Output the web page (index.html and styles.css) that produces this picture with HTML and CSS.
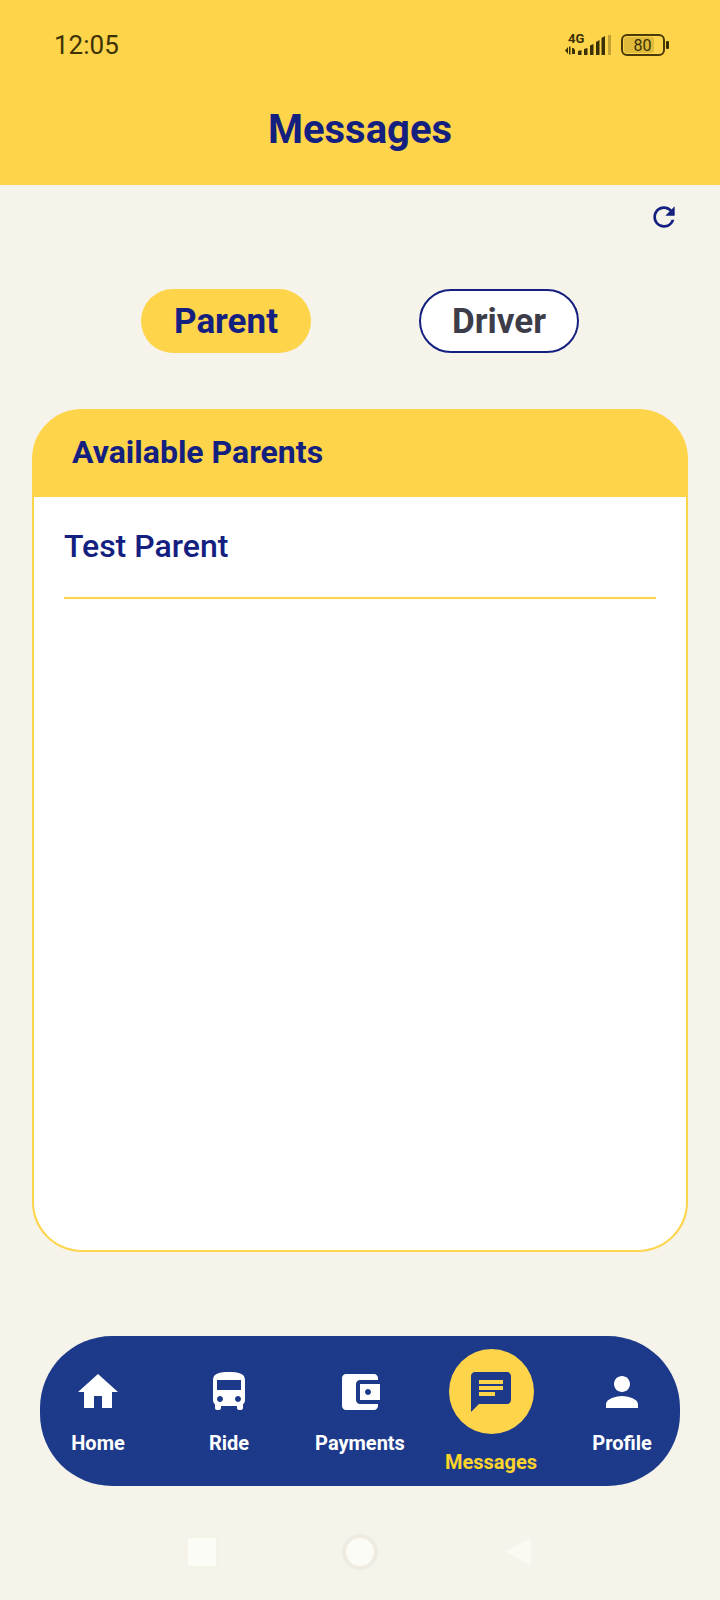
FILE: index.html
```html
<!DOCTYPE html>
<html lang="en">
<head>
<meta charset="utf-8">
<title>Messages</title>
<link rel="stylesheet" href="styles.css">
</head>
<body>
<div class="app">
  <header class="header">
    <div class="status">
      <span class="time">12:05</span>
      <svg class="status-icons" width="110" height="30" viewBox="-6 0 110 30" aria-hidden="true">
        <text x="-2" y="13" class="net">4G</text>
        <path d="M-5 20.500l3-3.500v7zM-1 16.500h1.500v8H-1zM2 18h1.500l1.500 2v4H2zM8 21l3.500-1v5H8zM14 19l3.500-1v7H14zM20 15.500l3.500-1.500v11H20zM26 12l3.500-2v15H26zM31.500 8l3.500-2v19h-3.500z" fill="#3a3005"/>
        <path d="M38 5h3v20h-3z" fill="#3a3005" opacity=".3"/>
        <rect x="52" y="5" width="42" height="20" rx="5" fill="none" stroke="#4a3a08" stroke-width="2"/>
        <rect x="54" y="7" width="30" height="16" rx="3" fill="#c7a52f" opacity=".55"/>
        <text x="72.500" y="21" class="level" text-anchor="middle">80</text>
        <rect x="96" y="11" width="3" height="8" rx="1" fill="#3a3005"/>
      </svg>
    </div>
    <h1 class="title">Messages</h1>
  </header>

  <main class="content">
    <div class="toolbar">
      <svg class="refresh" width="32" height="32" viewBox="0 0 24 24" aria-hidden="true">
        <path d="M17.650 6.350A7.958 7.958 0 0 0 12 4c-4.420 0-7.990 3.580-7.990 8s3.570 8 7.990 8c3.730 0 6.840-2.550 7.730-6h-2.080A5.990 5.990 0 0 1 12 18c-3.310 0-6-2.690-6-6s2.690-6 6-6c1.660 0 3.140.69 4.220 1.780L13 11h7V4l-2.350 2.350z"/>
      </svg>
    </div>

    <div class="tabs">
      <button class="tab tab-active">Parent</button>
      <button class="tab tab-idle">Driver</button>
    </div>

    <section class="card">
      <h2 class="card-head">Available Parents</h2>
      <div class="card-body">
        <div class="row">Test Parent</div>
      </div>
    </section>
  </main>

  <nav class="nav">
    <div class="nav-item">
      <span class="nav-icon"><svg width="48" height="48" viewBox="0 0 24 24"><path d="M10 20v-6h4v6h5v-8h3L12 3 2 12h3v8z"/></svg></span>
      <span class="nav-label">Home</span>
    </div>
    <div class="nav-item">
      <span class="nav-icon"><svg width="48" height="48" viewBox="0 0 24 24"><path d="M4 16c0 .88.39 1.670 1 2.220V20c0 .55.45 1 1 1h1c.55 0 1-.45 1-1v-1h8v1c0 .55.45 1 1 1h1c.55 0 1-.45 1-1v-1.780c.61-.55 1-1.340 1-2.220V6c0-3.500-3.580-4-8-4s-8 .5-8 4v10zm3.500 1c-.83 0-1.500-.67-1.500-1.500S6.670 14 7.500 14s1.500.67 1.500 1.500S8.330 17 7.500 17zm9 0c-.83 0-1.500-.67-1.500-1.500s.67-1.500 1.500-1.500 1.500.67 1.500 1.500-.67 1.500-1.500 1.500zm1.500-6H6V6h12v5z"/></svg></span>
      <span class="nav-label">Ride</span>
    </div>
    <div class="nav-item">
      <span class="nav-icon"><svg width="48" height="48" viewBox="0 0 24 24"><path d="M21 18v1c0 1.100-.9 2-2 2H5c-1.110 0-2-.9-2-2V5c0-1.100.89-2 2-2h14c1.100 0 2 .9 2 2v1h-9c-1.110 0-2 .9-2 2v8c0 1.100.89 2 2 2h9zm-9-2h10V8H12v8zm4-2.500c-.83 0-1.500-.67-1.500-1.500s.67-1.500 1.500-1.500 1.500.67 1.500 1.500-.67 1.500-1.500 1.500z"/></svg></span>
      <span class="nav-label">Payments</span>
    </div>
    <div class="nav-item nav-item-active">
      <span class="nav-circle"><svg width="48" height="48" viewBox="0 0 24 24"><path d="M20 2H4c-1.100 0-1.990.9-1.990 2L2 22l4-4h14c1.100 0 2-.9 2-2V4c0-1.100-.9-2-2-2zM6 9h12v2H6V9zm8 5H6v-2h8v2zm4-6H6V6h12v2z"/></svg></span>
      <span class="nav-label">Messages</span>
    </div>
    <div class="nav-item">
      <span class="nav-icon"><svg width="48" height="48" viewBox="0 0 24 24"><path d="M12 12c2.210 0 4-1.790 4-4s-1.790-4-4-4-4 1.790-4 4 1.790 4 4 4zm0 2c-2.670 0-8 1.340-8 4v2h16v-2c0-2.660-5.330-4-8-4z"/></svg></span>
      <span class="nav-label">Profile</span>
    </div>
  </nav>

  <div class="sysbar" aria-hidden="true">
    <span class="sys-square"></span>
    <span class="sys-circle"></span>
    <svg class="sys-back" width="28" height="30" viewBox="0 0 28 30"><path d="M27 1v28L1 14z"/></svg>
  </div>
</div>
</body>
</html>
```

FILE: styles.css
```css
* { box-sizing: border-box; }

html, body {
  margin: 0;
  padding: 0;
}

body {
  background: #f5f3ea;
  font-family: Roboto, "Liberation Sans", sans-serif;
}

.app {
  width: 720px;
  height: 1600px;
  display: flex;
  flex-direction: column;
  overflow: hidden;
}

.header {
  height: 185px;
  background: #fed44a;
  padding: 30px 54px 0;
}

.status {
  display: flex;
  justify-content: space-between;
  align-items: center;
  height: 30px;
  margin-right: -8px;
}

.time {
  font-size: 26px;
  line-height: 30px;
  color: #3d3206;
}

.net {
  font: 700 13px Roboto, sans-serif;
  fill: #3a3005;
}

.level {
  font: 400 16px Roboto, sans-serif;
  fill: #3a3005;
}

.title {
  margin: 45px 0 0;
  text-align: center;
  font-size: 40px;
  line-height: 50px;
  font-weight: 700;
  color: #14207f;
}

.content {
  flex: 0 0 auto;
  padding: 0 32px;
}

.toolbar {
  display: flex;
  justify-content: flex-end;
  padding: 16px 8px 0 0;
}

.refresh {
  display: block;
  fill: #14207f;
}

.tabs {
  display: flex;
  justify-content: flex-start;
  gap: 108px;
  margin: 56px 0 0 109px;
}

.tab {
  height: 64px;
  border-radius: 32px;
  font-family: inherit;
  font-size: 35px;
  font-weight: 700;
  padding: 0;
}

.tab-active {
  width: 170px;
  background: #fed44a;
  border: 0;
  color: #14207f;
}

.tab-idle {
  width: 160px;
  background: #fff;
  border: 2px solid #14207f;
  color: #3d3d4a;
}

.card {
  margin: 56px 0 0;
  width: 656px;
  height: 843px;
  border: 2px solid #fed44a;
  border-radius: 50px;
  background: #fed44a;
  overflow: hidden;
}

.card-head {
  margin: 0;
  height: 86px;
  padding: 0 0 0 38px;
  background: #fed44a;
  font-size: 32px;
  line-height: 82px;
  font-weight: 700;
  color: #14207f;
}

.card-body {
  height: 753px;
  padding: 0 30px;
  background: #fff;
}

.row {
  height: 102px;
  border-bottom: 2px solid #fed44a;
  font-size: 32px;
  font-weight: 500;
  line-height: 98px;
  color: #14207f;
}

.nav {
  margin: 84px 0 0 40px;
  width: 640px;
  height: 150px;
  padding: 13px 18px 0;
  border-radius: 72px;
  background: #1d3a8a;
  display: flex;
  justify-content: space-between;
  align-items: flex-start;
}

.nav-item {
  width: 80px;
  display: flex;
  flex-direction: column;
  align-items: center;
  color: #fff;
  fill: #fff;
}

.nav-icon {
  display: block;
  height: 48px;
  margin-top: 19px;
}

.nav-icon svg,
.nav-circle svg {
  display: block;
}

.nav-circle {
  width: 85px;
  height: 85px;
  flex: none;
  border-radius: 50%;
  background: #fed44a;
  fill: #1d3a8a;
  display: flex;
  align-items: center;
  justify-content: center;
}

.nav-label {
  margin-top: 17px;
  font-size: 20px;
  line-height: 20px;
  font-weight: 700;
  white-space: nowrap;
}

.nav-item-active .nav-label {
  margin-top: 18px;
  color: #fed42a;
}

.sysbar {
  margin: 48px 0 0 188px;
  width: 344px;
  display: flex;
  justify-content: space-between;
  align-items: center;
}

.sys-square {
  width: 28px;
  height: 28px;
  background: #fcfcf6;
  box-shadow: 0 0 4px #f1efe4;
}

.sys-circle {
  width: 36px;
  height: 36px;
  border-radius: 50%;
  background: #fbfbf5;
  border: 4px solid #eeece2;
}

.sys-back {
  fill: #fafaf3;
}
```
